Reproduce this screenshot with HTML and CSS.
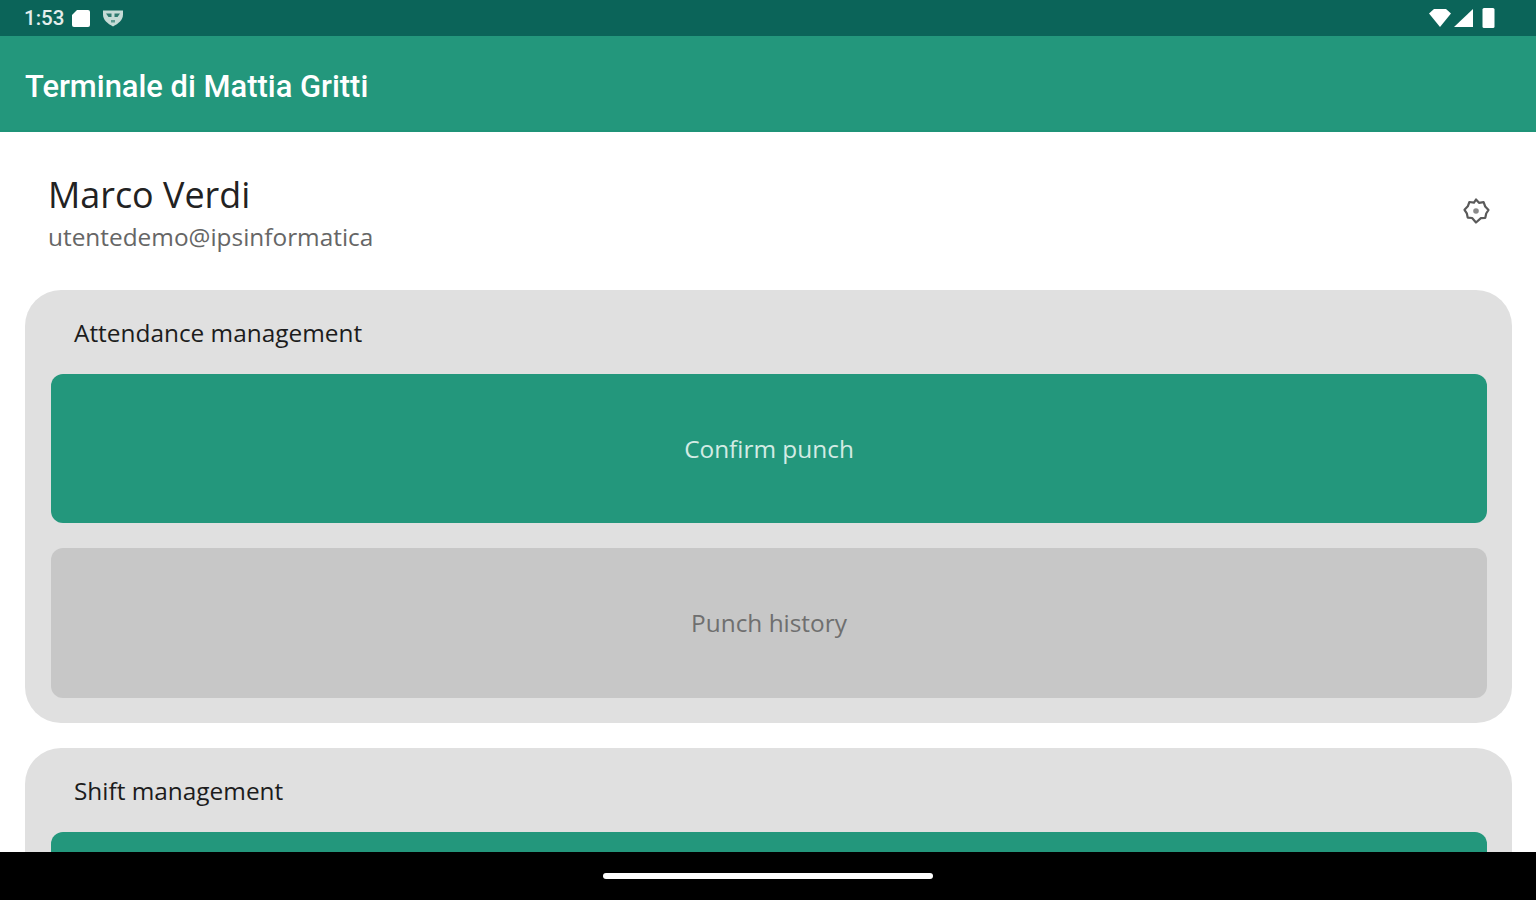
FILE: index.html
```html
<!DOCTYPE html>
<html lang="en">
<head>
  <meta charset="UTF-8">
  <meta name="viewport" content="width=device-width, initial-scale=1.0">
  <title>Terminale di Mattia Gritti</title>
  <link rel="stylesheet" href="styles.css">
</head>
<body>
  <div class="status-bar">
    <div class="status-left">
      <span class="status-time">1:53</span>
      <svg class="icon-sd" width="20" height="18" viewBox="0 0 20 18"><path d="M6 1h11a2 2 0 0 1 2 2v13a2 2 0 0 1-2 2H3a2 2 0 0 1-2-2V6z" fill="#fff"/></svg>
      <svg class="icon-shield" width="22" height="20" viewBox="0 0 22 20"><path d="M1 2.500h20v4c0 5.500-4.500 9-10 12-5.500-3-10-6.500-10-12z" fill="#c6dbd6"/><path d="M4 5.500h5.500v3.500H6.500zM18 5.500h-5.500v3.500h3z" fill="#2f7a6f"/><path d="M9 12h4v2.500H9z" fill="#5d9a90"/></svg>
    </div>
    <div class="status-right">
      <svg width="22" height="18" viewBox="0 0 22 18"><path d="M0 4.500 5 0h12l5 4.500L11 18z" fill="#fff"/></svg>
      <svg width="20" height="18" viewBox="0 0 20 18"><path d="M0 18 19 0v18z" fill="#fff"/></svg>
      <svg width="13" height="20" viewBox="0 0 13 20"><rect x="0.500" y="0" width="12" height="20" rx="1.500" fill="#fff"/></svg>
    </div>
  </div>
  <header class="app-bar">Terminale di Mattia Gritti</header>
  <main class="content">
    <div class="profile">
      <div class="profile-text">
        <div class="profile-name">Marco Verdi</div>
        <div class="profile-mail">utentedemo@ipsinformatica</div>
      </div>
      <svg class="settings" width="28" height="30" viewBox="0 0 28 30" fill="none" stroke="#5a5a5a" stroke-width="2.200">
        <path d="M14 3.500l3 3.300 4.600-.6 1.600 4.300 3.300 3.500-2.300 3.500-.9 4.300-4.400.4L14 26.500l-3.900-4.500-4.400-.4-.9-4.300-2.300-3.500 3.300-3.500 1.600-4.300 4.600.6z" stroke-linejoin="round"/>
        <circle cx="14" cy="15" r="2.800" fill="#8a8a8a" stroke="none"/>
      </svg>
    </div>
    <section class="card">
      <h2 class="card-title">Attendance management</h2>
      <button class="action action-primary">Confirm punch</button>
      <button class="action action-disabled">Punch history</button>
    </section>
    <section class="card">
      <h2 class="card-title">Shift management</h2>
      <button class="action action-primary"></button>
    </section>
  </main>
  <div class="nav-bar"><span class="nav-handle"></span></div>
</body>
</html>
```

FILE: styles.css
```css
html, body {
  margin: 0;
  height: 900px;
  overflow: hidden;
}
body {
  display: flex;
  flex-direction: column;
  background-color: #fff;
  font-family: "Open Sans", "Noto Sans", sans-serif;
}
.status-bar {
  flex: 0 0 36px;
  display: flex;
  justify-content: space-between;
  align-items: center;
  padding: 0 41px 0 24px;
  background-color: #0b6459;
  color: #e4eeec;
}
.status-left {
  display: flex;
  align-items: center;
  gap: 7px;
}
.status-time {
  font-family: Roboto, sans-serif;
  font-size: 20.500px;
  font-weight: 500;
}
.icon-shield {
  margin-left: 4px;
}
.status-right {
  display: flex;
  align-items: center;
  gap: 3px;
}
.status-right svg:last-child {
  margin-left: 5px;
}
.app-bar {
  flex: 0 0 96px;
  display: flex;
  align-items: center;
  box-sizing: border-box;
  padding: 6px 25px 0;
  background-color: #23977c;
  border-bottom: 2px solid #1f9478;
  color: #fff;
  font-family: Roboto, sans-serif;
  font-size: 30.900px;
  font-weight: 500;
}
.content {
  flex: 1;
  min-height: 0;
  overflow: hidden;
  padding: 0 24px 0 25px;
}
.profile {
  display: flex;
  justify-content: space-between;
  align-items: center;
  height: 158px;
  padding: 0 22px 0 23px;
}
.profile-text {
  padding-top: 2px;
}
.profile-name {
  padding-top: 2px;
  color: #222;
  font-size: 35.900px;
  line-height: 48px;
}
.profile-mail {
  color: #666;
  font-size: 24.400px;
  line-height: 36px;
}
.card {
  display: flex;
  flex-direction: column;
  gap: 25px;
  padding: 0 25px 25px 26px;
  margin-bottom: 25px;
  background-color: #e0e0e0;
  border-radius: 36px;
}
.card-title {
  margin: 0;
  padding: 27px 0 0 23px;
  color: #1c1c1c;
  font-size: 24.400px;
  font-weight: 400;
  line-height: 32px;
}
.action {
  display: block;
  height: 149px;
  flex: none;
  width: 100%;
  border: none;
  border-radius: 12px;
  font-family: inherit;
  font-size: 24.400px;
}
.action-primary {
  background-color: #23977c;
  color: #d3ebe4;
}
.action-disabled {
  height: 150px;
  padding-bottom: 3px;
  background-color: #c7c7c7;
  color: #6f6f6f;
}
.nav-bar {
  flex: 0 0 48px;
  display: flex;
  justify-content: center;
  align-items: center;
  background-color: #000;
}
.nav-handle {
  width: 330px;
  height: 6px;
  border-radius: 3px;
  background-color: #fff;
}
```
